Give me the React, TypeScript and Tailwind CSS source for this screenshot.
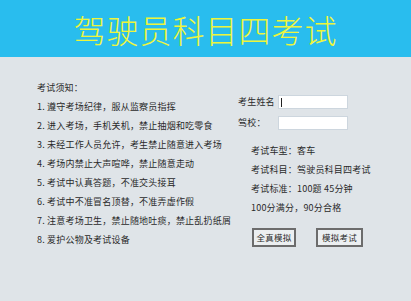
import React from 'react';

const rules = [
  '1. 遵守考场纪律，服从监察员指挥',
  '2. 进入考场，手机关机，禁止抽烟和吃零食',
  '3. 未经工作人员允许，考生禁止随意进入考场',
  '4. 考场内禁止大声喧哗，禁止随意走动',
  '5. 考试中认真答题，不准交头接耳',
  '6. 考试中不准冒名顶替，不准弄虚作假',
  '7. 注意考场卫生，禁止随地吐痰，禁止乱扔纸屑',
  '8. 爱护公物及考试设备',
];

const font = { fontFamily: '"Noto Sans CJK SC", "Liberation Sans", sans-serif' };

export default function App() {
  return (
    <div className="h-screen flex flex-col bg-[#dfe4e8] text-[#2a2a2a] overflow-hidden" style={font}>
      <div className="h-[57px] shrink-0 bg-[#29bdee] flex items-center justify-center">
        <h1 className="text-[32px] leading-none font-light text-[#eef53c] tracking-[1px]">驾驶员科目四考试</h1>
      </div>
      <div className="flex">
        <div className="w-[238px] shrink-0 pl-[37px] pt-[21px] text-[9px] leading-[19px] tracking-[0.2px] whitespace-nowrap">
          <div>考试须知：</div>
          {rules.map((r) => (
            <div key={r}>{r}</div>
          ))}
        </div>
        <div className="pt-[38px] text-[9px] tracking-[0.2px] whitespace-nowrap">
          <Field label="考生姓名" caret />
          <div className="h-[7px]" />
          <Field label="驾校：" />
          <div className="pl-[13px] pt-[11px] leading-[19px]">
            <div>考试车型：客车</div>
            <div>考试科目：驾驶员科目四考试</div>
            <div>考试标准：100题 45分钟</div>
            <div>100分满分，90分合格</div>
          </div>
          <div className="flex gap-[20px] pl-[14px] pt-[11px]">
            <button className="w-[44px] h-[19px] border-2 border-[#6c6c6c] bg-[#eceff1] text-[8.5px] leading-none">全真模拟</button>
            <button className="w-[47px] h-[19px] border-2 border-[#6c6c6c] bg-[#eceff1] text-[8.5px] leading-none">模拟考试</button>
          </div>
        </div>
      </div>
    </div>
  );
}

function Field({ label, caret }: { label: string; caret?: boolean }) {
  return (
    <div className="flex items-center h-[14px]">
      <span className="w-[40px]">{label}</span>
      <div className="w-[70px] h-[14px] bg-white border border-[#cdd6de] flex items-center pl-[2px]">
        {caret && <span className="w-px h-[9px] bg-[#222]" />}
      </div>
    </div>
  );
}
